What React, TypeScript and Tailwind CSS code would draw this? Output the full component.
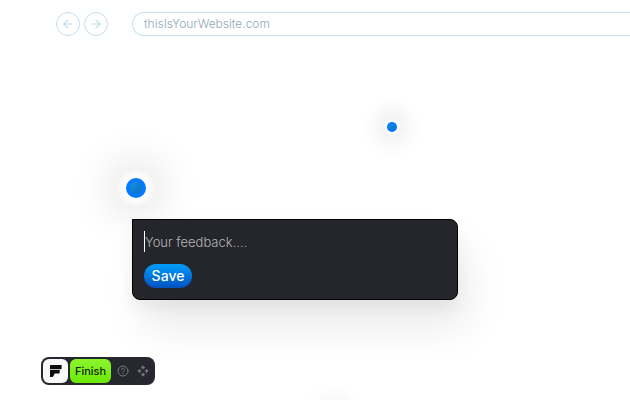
import { ArrowLeft, ArrowRight } from "lucide-react";

type PinProps = {
  label: string;
  className: string;
  size: "sm" | "lg";
};

const pinSizes = {
  sm: {
    halo: "h-4 w-4 bg-[#fcfcfc] shadow-[0_0_22px_6px_rgba(0,0,0,0.1)]",
    dot: "h-[10px] w-[10px]",
    core: "h-1.5 w-1.5",
  },
  lg: {
    halo: "h-9 w-9 bg-[#f8f8f8] shadow-[0_0_40px_10px_rgba(0,0,0,0.1)]",
    dot: "h-5 w-5 ring-4 ring-[#fdfdfd]",
    core: "h-3 w-3",
  },
};

function Pin({ label, className, size }: PinProps) {
  const styles = pinSizes[size];

  return (
    <button
      type="button"
      aria-label={label}
      className={`absolute flex items-center justify-center rounded-full ${styles.halo} ${className}`}
    >
      <span className={`flex items-center justify-center rounded-full bg-[#0679ff] ${styles.dot}`}>
        <span className={`rounded-full bg-linear-to-br from-[#1194e4] to-[#0b70bd] ${styles.core}`} />
      </span>
    </button>
  );
}

function BrowserBar() {
  return (
    <header className="flex items-center pl-14 pt-3">
      <nav className="flex gap-1" aria-label="History">
        <button
          type="button"
          aria-label="Back"
          className="flex h-6 w-6 items-center justify-center rounded-full border border-[#c6e0ee] text-[#bddbea]"
        >
          <ArrowLeft className="h-3.5 w-3.5" strokeWidth={2} />
        </button>
        <button
          type="button"
          aria-label="Forward"
          className="flex h-6 w-6 items-center justify-center rounded-full border border-[#c6e0ee] text-[#bddbea]"
        >
          <ArrowRight className="h-3.5 w-3.5" strokeWidth={2} />
        </button>
      </nav>
      <input
        type="text"
        aria-label="Address"
        defaultValue="thisIsYourWebsite.com"
        className="ml-6 h-6 min-w-0 flex-1 rounded-l-full border border-r-0 border-[#c6e0ee] bg-white pb-0.5 pl-[11px] text-[12px] font-light text-[#8fa9b8] outline-none"
      />
    </header>
  );
}

function FeedbackForm() {
  return (
    <form
      className="absolute left-[132px] top-[219px] w-[326px] rounded-lg rounded-tl-none border border-black bg-[#25262b] p-[11px] shadow-[0_8px_16px_rgba(0,0,0,0.05),10px_28px_40px_rgba(0,0,0,0.08)]"
      onSubmit={(event) => event.preventDefault()}
    >
      <input
        type="text"
        aria-label="Your feedback"
        placeholder="Your feedback...."
        className="block h-[21px] w-full border-l border-white bg-transparent text-[13px] font-light text-white outline-none placeholder:text-[#b4b5b8]"
      />
      <button
        type="submit"
        className="mt-3 flex h-6 w-12 items-center justify-center rounded-full bg-linear-to-b from-[#059cfa] to-[#0352c0] pb-0.5 text-[14px] font-medium text-white"
      >
        Save
      </button>
    </form>
  );
}

function Toolbar() {
  return (
    <div
      role="toolbar"
      aria-label="Feedback tools"
      className="absolute bottom-[15px] left-[41px] flex h-7 items-center rounded-lg bg-[#26272f] pl-0.5 pr-1.5"
    >
      <a
        href="#home"
        aria-label="Home"
        className="flex h-6 w-[25px] items-center justify-center rounded-md bg-[#f8f8f9] text-[#0b0c0e]"
      >
        <svg viewBox="0 0 12 12" className="h-3 w-3" fill="currentColor">
          <path d="M.6 0H11.6V3.6Q11.6 4.3 10.9 4.3H0V.6Q0 0 .6 0Z" />
          <path d="M0 5H9.7V7.7Q9.7 8.5 8.9 8.5H4.7L3.3 11.2Q2.9 12 2 12H0Z" />
        </svg>
      </a>
      <button
        type="button"
        className="ml-0.5 flex h-6 w-[41px] items-center justify-center rounded-md bg-linear-to-b from-[#8cf52b] to-[#6be800] text-[11px] font-medium text-[#14240a]"
      >
        Finish
      </button>
      <button type="button" aria-label="Help" className="ml-1.5 text-[#777880]">
        <svg viewBox="0 0 12 12" className="h-3 w-3" fill="none" stroke="currentColor" strokeLinecap="round">
          <circle cx="6" cy="6" r="5" />
          <path d="M4.5 4.8C4.5 3.8 5.1 3.2 6 3.2S7.5 3.8 7.5 4.6C7.5 5.5 6 5.6 6 6.8" />
          <circle cx="6" cy="8.6" r=".65" fill="currentColor" stroke="none" />
        </svg>
      </button>
      <button type="button" aria-label="Move" className="ml-2 text-[#777880]">
        <svg
          viewBox="0 0 12 12"
          className="h-3 w-3"
          fill="currentColor"
          stroke="currentColor"
          strokeWidth=".8"
          strokeLinejoin="round"
        >
          <path d="M6 .8 7.8 2.8H4.2ZM6 11.2 4.2 9.2H7.8ZM.8 6 2.8 4.2V7.8ZM11.2 6 9.2 7.8V4.2Z" />
          <path d="M6 2.6V4.2M6 7.8V9.4M2.6 6H4.2M7.8 6H9.4" strokeWidth="1.2" />
        </svg>
      </button>
    </div>
  );
}

export default function App() {
  return (
    <main className="relative min-h-screen overflow-hidden bg-white font-[Inter,sans-serif]">
      <BrowserBar />
      <Pin label="Comment 1" size="sm" className="left-[384px] top-[119px]" />
      <Pin label="Comment 2" size="lg" className="left-[118px] top-[170px]" />
      <Pin label="Comment 3" size="sm" className="-bottom-6 left-[326px]" />
      <FeedbackForm />
      <Toolbar />
    </main>
  );
}
